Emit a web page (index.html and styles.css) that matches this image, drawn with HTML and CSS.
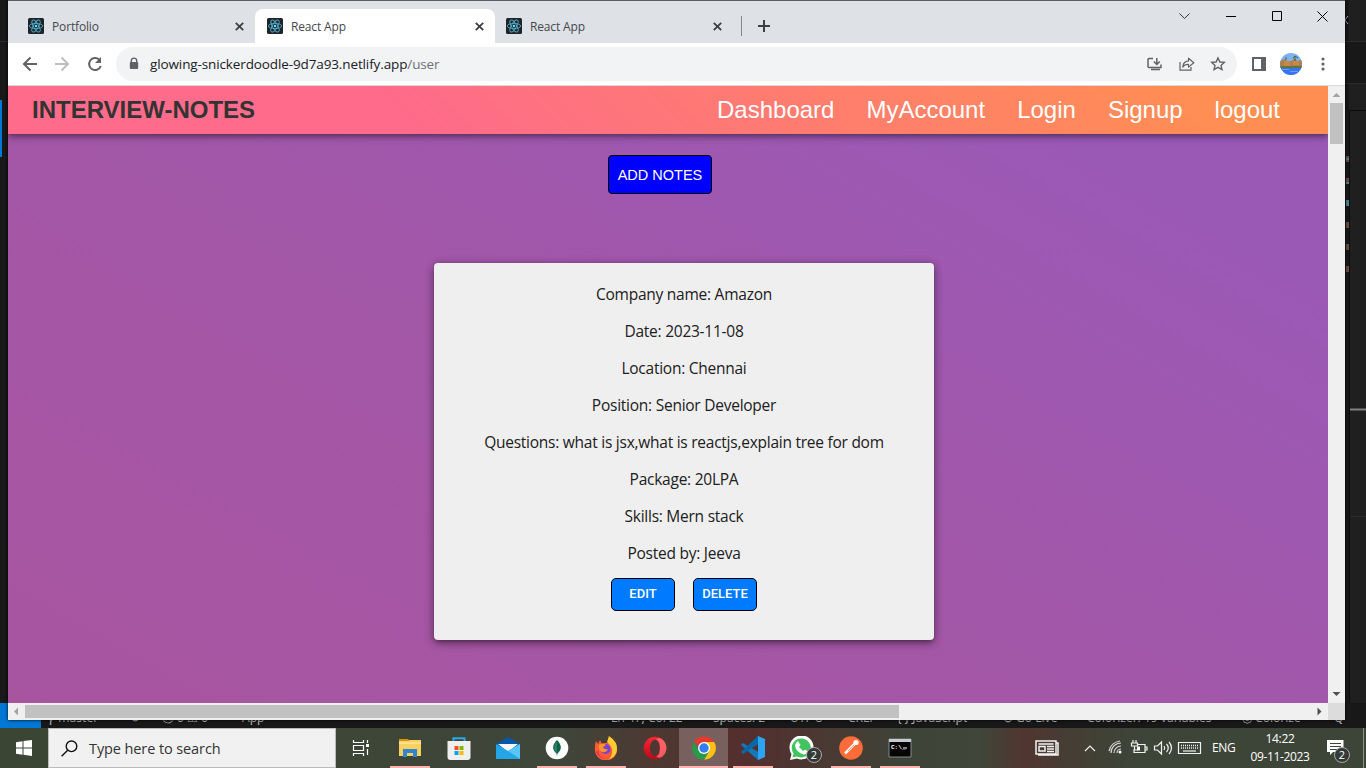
FILE: index.html
```html
<!DOCTYPE html>
<html lang="en">
<head>
<meta charset="utf-8">
<title>Interview Notes</title>
<link rel="stylesheet" href="styles.css">
</head>
<body>
<svg class="defs" aria-hidden="true">
  <symbol id="react" viewBox="0 0 16 16"><rect width="16" height="16" rx="1.5" fill="#20232a"/><g fill="none" stroke="#4fa9c4" stroke-width=".9"><ellipse cx="8" cy="8" rx="6.7" ry="2.6"/><ellipse cx="8" cy="8" rx="6.7" ry="2.6" transform="rotate(60 8 8)"/><ellipse cx="8" cy="8" rx="6.7" ry="2.6" transform="rotate(120 8 8)"/></g><circle cx="8" cy="8" r="1.3" fill="#61dafb"/></symbol>
  <symbol id="close" viewBox="0 0 8 8"><path d="M.7.7l6.6 6.6M7.3.7L.7 7.3" stroke="#3c4043" stroke-width="1.6"/></symbol>
</svg>
<div class="desktop">
  <div class="editor">
    <div class="rail"><i class="rail-line"></i><i class="rail-active"></i></div>
    <div class="side">
      <svg width="21" height="703" viewBox="0 0 21 703">
        <path fill="#1f1f1f" d="M0 0h21v703H0z"/><path fill="#181818" d="M0 0h4v703H0zM4 42h17v41H4z"/>
        <path stroke="#2b2b2b" d="M0 41.500h21M0 83.500h21M4 516.500h17"/><path stroke="#0c0c0c" fill="none" d="M21 110.500H4.500V703"/>
        <path stroke="#808080" stroke-width="2" d="M5 409.500h16"/><path stroke="#aaa" d="M3 16l-3 4 3 4"/>
        <g fill="#684b42"><path d="M1 156h3v6H1zM1 178h3v6H1zM1 222h3v6H1zM1 244h3v6H1zM1 266h3v6H1z"/></g><path fill="#4a8090" d="M1 158h3v2H1zM1 182h3v2H1zM1 200h3v6H1z"/>
      </svg>
    </div>
    <div class="status">
      <span class="remote">&gt;&lt;</span><span class="st s1">ꝩ master</span><span class="st s2">↻</span><span class="st s3">ⓧ 0 ⚠ 0</span><span class="st s4">App</span>
      <span class="st s5">Ln 47, Col 22</span><span class="st s6">Spaces: 2</span><span class="st s7">UTF-8</span><span class="st s8">CRLF</span><span class="st s9">{ } JavaScript</span><span class="st s10">⊚ Go Live</span><span class="st s11">Colorizer: 19 variables</span><span class="st s12">◎ Colorize</span><span class="st s13">Q</span>
    </div>
  </div>

  <main class="window">
    <div class="tabs">
      <div class="tab"><svg class="fav"><use href="#react"/></svg><span>Portfolio</span><svg class="x"><use href="#close"/></svg></div>
      <div class="tab active"><svg class="fav"><use href="#react"/></svg><span>React App</span><svg class="x"><use href="#close"/></svg></div>
      <div class="tab"><svg class="fav"><use href="#react"/></svg><span>React App</span><svg class="x"><use href="#close"/></svg></div>
      <i class="tab-sep"></i>
      <svg class="plus" width="12" height="12"><path d="M6 0v12M0 6h12" stroke="#3c4043" stroke-width="2"/></svg>
      <svg class="controls" width="152" height="14" viewBox="0 0 152 14" fill="none" stroke="#000"><path stroke="#333" d="M.5 4.500l5 5 5-5"/><path d="M47 7.500h10M93.500 2.500h9v9h-9zM138.500 2.500l10 10M148.500 2.500l-10 10"/></svg>
    </div>
    <div class="toolbar">
      <svg class="navs" width="82" height="16" viewBox="0 0 82 16" fill="none" stroke-width="2"><path stroke="#5f6368" d="M15 8H2M8.500 1.500L2 8l6.500 6.500"/><path stroke="#bcbec1" d="M33 8h13M39.500 1.500L46 8l-6.500 6.500"/><path stroke="#5f6368" d="M77.300 3.700A6 6 0 1 0 78.800 10"/><path fill="#5f6368" d="M79 1v6h-6z"/></svg>
      <div class="omnibox">
        <svg class="lock" width="10" height="14" viewBox="0 0 10 14"><path d="M2.300 6V3.800a2.700 2.700 0 0 1 5.400 0V6" fill="none" stroke="#5f6368" stroke-width="1.400"/><rect x=".8" y="5" width="8.400" height="7" rx="1" fill="#5f6368"/></svg>
        <span class="url">glowing-snickerdoodle-9d7a93.netlify.app<em>/user</em></span>
        <svg class="omni-icons" width="80" height="16" viewBox="0 0 80 16" fill="none" stroke="#5f6368" stroke-width="1.500"><path d="M6 2.500H2Q1 2.500 1 3.500v7q0 1 1 1h12v-3M9.800 2v6M6.800 5.500l3 3 3-3M4 13.500h9" /><path d="M33 6v8.200h11V11" stroke-width="1.200"/><path d="M41.500 2.200l5.300 4.600-5.300 4.300V8.500q-3.800-.3-5.800 2.700.3-5.600 5.800-6.300z" stroke-width="1.200" stroke-linejoin="round"/><path d="M71 2l1.900 4 4.400.4-3.300 3 1 4.300-4-2.300-4 2.300 1-4.300-3.300-3 4.400-.4z" stroke-width="1.400"/></svg>
      </div>
      <svg class="panel" width="14" height="14"><path fill="#5f6368" d="M0 0h14v14H0z"/><path fill="#fff" d="M2 2h7v10H2z"/></svg>
      <svg class="avatar" width="22" height="22" viewBox="0 0 22 22"><defs><clipPath id="av"><circle cx="11" cy="11" r="11"/></clipPath></defs><g clip-path="url(#av)"><path fill="#7eb2ef" d="M0 0h22v22H0z"/><path fill="#a88252" d="M0 8l5-2 2 2h5l2-3 3 3 5-1v8H0z"/><path fill="#c98743" d="M4 8h6v5H4zM13 8h6v4h-6z"/><path fill="#5e7441" d="M0 13h22v2H0z"/><path fill="#3874ed" d="M0 15h22v7H0z"/><path stroke="#6d9af7" d="M2 16.500h7M10 18.500h8"/><path stroke="#456147" fill="none" d="M15 8V4M13 5l2-2 3 2M6 7V4"/></g></svg>
      <svg class="dots" width="4" height="14"><circle cx="2" cy="2" r="1.600"/><circle cx="2" cy="7" r="1.600"/><circle cx="2" cy="12" r="1.600"/></svg>
    </div>
    <div class="viewport">
      <div class="page">
        <header class="nav"><h1>INTERVIEW-NOTES</h1><nav><a>Dashboard</a><a>MyAccount</a><a>Login</a><a>Signup</a><a>logout</a></nav></header>
        <button class="add">ADD NOTES</button>
        <article class="card">
          <p>Company name: Amazon</p><p>Date: 2023-11-08</p><p>Location: Chennai</p><p>Position: Senior Developer</p><p>Questions: what is jsx,what is reactjs,explain tree for dom</p><p>Package: 20LPA</p><p>Skills: Mern stack</p><p>Posted by: Jeeva</p>
          <div class="actions"><button>EDIT</button><button>DELETE</button></div>
        </article>
      </div>
      <div class="vscroll"><svg width="17" height="17"><path fill="#a3a3a3" d="M4.500 11l4-4 4 4z"/></svg><i></i><svg class="down" width="17" height="17"><path fill="#505050" d="M4.500 6l4 4 4-4z"/></svg></div>
    </div>
    <div class="hscroll"><svg width="17" height="17"><path fill="#a3a3a3" d="M10 4.500l-4 4 4 4z"/></svg><i></i><svg class="right" width="17" height="17"><path fill="#505050" d="M6.500 4.500l4 4-4 4z"/></svg><b></b></div>
  </main>

  <footer class="taskbar">
    <div class="start"><svg width="16" height="16" viewBox="0 0 16 16" fill="#fff"><path d="M0 2.200l6.500-.9v6.200H0zM7.500 1.100L16 0v7.500H7.500zM0 8.500h6.500v6.200L0 13.800zM7.500 8.500H16V16l-8.500-1.200z"/></svg></div>
    <div class="search"><svg width="17" height="17" viewBox="0 0 17 17" fill="none" stroke="#111" stroke-width="1.400"><circle cx="10.500" cy="6.300" r="5.300"/><path d="M6.700 10.200L.6 16.300"/></svg><span>Type here to search</span></div>
    <div class="apps">
      <div class="app view"><svg width="18" height="16" viewBox="0 0 18 16" fill="none" stroke="#fff" stroke-width="1.200"><path d="M1.500 0v2.500h10V0M1.500 5.500h10v5h-10zM1.500 16v-2.500h10V16M15.500 0v3M15.500 9v6"/><path d="M14 4h3v3h-3z" fill="#fff" stroke="none"/></svg></div>
      <div class="app on"><svg width="24" height="24" viewBox="0 0 24 24"><path fill="#d89512" d="M1 3h9l2 2v4H1z"/><path fill="#fcd05e" d="M1 5h9l2-1h11v16H1z"/><path fill="#ffe08a" d="M1 6h22v2H1z"/><path fill="#2f86d0" d="M5 13h14v8h-4v-4H9v4H5z"/></svg></div>
      <div class="app"><svg width="24" height="24" viewBox="0 0 24 24"><path d="M6.500 7V2.300h11V7" fill="none" stroke="#25abe8" stroke-width="2"/><path fill="#efefef" d="M.5 5h23v16q0 3-3 3h-17q-3 0-3-3z"/><path fill="#f25022" d="M7.500 10h4v4h-4z"/><path fill="#7fba00" d="M12.500 10h4v4h-4z"/><path fill="#00a4ef" d="M7.500 15h4v4h-4z"/><path fill="#ffb900" d="M12.500 15h4v4h-4z"/></svg></div>
      <div class="app"><svg width="24" height="24" viewBox="0 0 24 24"><path fill="#0758a8" d="M0 8l12-7 12 7v6H0z"/><path fill="#f4f6f7" d="M2 8h20L12 16z"/><path fill="#22a6e8" d="M0 8l12 7 12-7v15H0z"/><path fill="#58c7f5" d="M24 8v15L12 15z"/></svg></div>
      <div class="app on"><svg width="24" height="24" viewBox="0 0 24 24"><circle cx="12" cy="12" r="11.300" fill="#fff"/><path fill="#116149" d="M12 4c5 5 5 10 .5 13.500L12 20l-.5-2.500C7 14 7 9 12 4z"/><path fill="#3fa37c" d="M12 5v12c-4-3-3.500-8 0-12z" opacity=".5"/></svg></div>
      <div class="app on"><svg width="24" height="24" viewBox="0 0 24 24"><path fill="#ff5b36" d="M2 5l2 3 2-4 2 4q4-2 6-1l1-6q8 5 8 13a11 10.500 0 0 1-22 0Q.5 9 2 5z"/><path fill="#ffcb32" d="M15 0q9 6 8 14-1 7-8 9 6-7 1-14l-3-3z"/><circle cx="11.500" cy="13" r="5" fill="#7542d8"/><path fill="#ff9527" d="M5 9q4-3 7 0l-3 2q1 3 5 2-2 4-6 3-4-2-3-7z"/><path fill="#e8305e" d="M2 16q3 7 11 7-8-1-9-9z"/></svg></div>
      <div class="app"><svg width="24" height="24" viewBox="0 0 24 24"><defs><linearGradient id="op" x2="0" y2="1"><stop stop-color="#fb2634"/><stop offset="1" stop-color="#bd0916"/></linearGradient></defs><path fill="url(#op)" fill-rule="evenodd" d="M12 .7a11.300 11.300 0 1 0 0 22.600 11.300 11.300 0 1 0 0-22.600zm0 3c3 0 4.500 4 4.500 8.300s-1.500 8.300-4.500 8.300S7 16.300 7 12s2-8.300 5-8.300z"/><path fill="#ff777c" d="M13 3.500q4-2.500 7 .5a11 11 0 0 1 0 16q-3 3-7 .5 4-1 4-8.500t-4-8.500z" opacity=".75"/></svg></div>
      <div class="app on chrome"><svg width="24" height="24" viewBox="0 0 24 24"><path fill="#e33b2e" d="M12 12L1.800 6A11.800 11.800 0 0 1 22.200 6H12z"/><path fill="#fbc116" d="M12 6h10.200A11.800 11.800 0 0 1 12 23.800L17.200 15z"/><path fill="#269b49" d="M1.800 6l5 9q4 4 10.400 0L12 23.800A11.800 11.800 0 0 1 1.800 6z"/><circle cx="12" cy="12" r="6" fill="#fff"/><circle cx="12" cy="12" r="4.700" fill="#347df0"/></svg></div>
      <div class="app on"><svg width="24" height="24" viewBox="0 0 24 24"><path fill="#1478bc" d="M2 7L0 9l17 15 2-1V17z"/><path fill="#0868a8" d="M0 16l2 2L19 7V1l-2-1z"/><path fill="#2ba5ef" d="M17 0l7 3v18l-7 3V0z"/></svg></div>
      <div class="app wa"><svg width="25" height="24" viewBox="0 0 25 24"><path fill="#fff" d="M1 24l1.500-6A12 12 0 1 1 8 22.500z"/><path fill="#41c45b" d="M3.500 21.500l1-4A9.500 9.500 0 1 1 8 20.500z"/><path fill="#fff" d="M7 7l2-2 2.500 4-1.500 2 4 4 2-1.500L19 15.500q-1 3-4 3-8-2-9-9z"/></svg><b>2</b></div>
      <div class="app on"><svg width="24" height="24" viewBox="0 0 24 24"><circle cx="12" cy="12" r="11.800" fill="#ff6c37"/><path d="M6 17.500l10-10" stroke="#fff" stroke-width="2.600"/><circle cx="17" cy="6.500" r="2.600" fill="#fff"/><path d="M9 15l6-6" stroke="#ff6c37" stroke-width=".7"/></svg></div>
      <div class="app on"><svg width="24" height="20" viewBox="0 0 24 20"><path fill="#050505" stroke="#85898c" d="M1 1h22v18H1z"/><path fill="#c6cbd2" d="M1 1h22v3H1z"/><text x="3" y="10.500">C:\_</text><path d="M15 10h4" stroke="#fff"/></svg></div>
    </div>
    <svg class="tray" width="206" height="24" viewBox="0 0 206 24" fill="none" stroke="#f2f2f2" stroke-width="1.200">
      <path stroke-width="1.500" d="M2 5h20v13H2zM22 7h2v12H4M4.500 8h15"/><path stroke-width="1.500" d="M5 10.500h6V15H5zM13 10.500h7M13 13h7M13 15.500h7"/>
      <path d="M51 15l5-5 5 5"/>
      <path stroke="#d9d9d9" d="M77 17a10 10 0 0 1 10-10M80 17a7 7 0 0 1 7-7M83 17a4 4 0 0 1 4-4M75 15A13 13 0 0 1 86 5"/><circle cx="86" cy="16" r="1.500" fill="#fff" stroke="none"/>
      <path d="M99 4v3M102 4v3M97.500 7h6v3h-6zM100.500 10v4h3M103 8.500h8v8h-11v-3M111 11h2v3h-2"/><path fill="#fff" stroke="none" d="M103 10.500h3v4h-3z"/>
      <path d="M120.500 10h3l4-4v12l-4-4h-3zM130 10q1.500 2 0 4M132.500 8q3.500 4 0 8M135 6q5 6 0 12"/>
      <path d="M144.500 6.500h22v11h-22z"/><path stroke-dasharray="1 1" stroke-width="1.500" d="M147 9.500h17M147 12h17"/><path d="M149 15h13"/>
    </svg>
    <span class="lang">ENG</span>
    <div class="clock"><span>14:22</span><span>09-11-2023</span></div>
    <div class="notice"><svg width="17" height="16" viewBox="0 0 17 16"><path fill="#fff" d="M0 0h16.500v12H6l-3 3v-3H0z"/><path stroke="#3d4538" d="M3 3.500h11M3 6.500h11M3 9.500h7"/></svg><b>2</b></div>
    <i class="peek"></i>
  </footer>
</div>
</body>
</html>
```
FILE: styles.css
```css
* { box-sizing: border-box; }
body { margin: 0; overflow: hidden; font-family: "Open Sans", sans-serif; }
svg { display: block; flex: none; }
.defs { position: absolute; width: 0; height: 0; }
.desktop { position: relative; width: 1366px; height: 768px; display: flex; flex-direction: column; background: #181818; }

.editor { height: 728px; display: grid; grid-template-columns: 8px 1fr 21px; grid-template-rows: 703px 25px; overflow: hidden; }
.rail { padding-top: 41px; background: #181818; }
.rail-line { display: block; height: 1px; background: #2b2b2b; }
.rail-active { display: block; width: 2px; height: 57px; margin-top: 58px; background: #0078d4; }
.side { grid-column: 3; }
.status { grid-column: 1 / -1; position: relative; background: #181818; color: #bbb; font: 12px/25px "Noto Sans", sans-serif; }
.remote { display: block; width: 41px; height: 25px; padding-left: 14px; line-height: 24px; background: #0078d4; }
.st { position: absolute; top: 2px; white-space: nowrap; }
.s1 { left: 49px; } .s2 { left: 130px; } .s3 { left: 162px; } .s4 { left: 242px; }
.s5 { left: 611px; } .s6 { left: 713px; } .s7 { left: 790px; } .s8 { left: 848px; } .s9 { left: 897px; }
.s10 { left: 1003px; } .s11 { left: 1087px; } .s12 { left: 1242px; } .s13 { left: 1334px; }

.window { position: absolute; left: 8px; top: 0; width: 1337px; height: 720px; display: flex; flex-direction: column; background: #fff; border-top: 1px solid #5c5e61; box-shadow: 0 0 3px #000; }
.tabs { height: 42px; display: flex; align-items: center; padding: 8px 14px 0 8px; background: #dee1e6; font-size: 12px; color: #45484c; }
.tab { width: 239px; height: 34px; display: flex; align-items: center; padding: 0 11px 0 12px; letter-spacing: -.15px; }
.tab span { margin-left: 8px; flex: 1; }
.tab.active { width: 240px; background: #fff; border-radius: 8px 8px 0 0; margin-right: -1px; }
.fav { width: 16px; height: 16px; }
.x { width: 9px; height: 9px; }
.tab-sep { width: 1px; height: 20px; margin-left: 8px; background: #80868b; }
.plus { margin-left: 16px; }
.controls { margin: -20px 0 0 auto; }
.toolbar { height: 43px; display: flex; align-items: center; border-bottom: 1px solid #d8dade; background: #fff; padding-right: 20px; }
.navs { margin: 0 12px 0 14px; }
.omnibox { width: 1121px; height: 34px; display: flex; align-items: center; padding: 0 10px 0 13px; border-radius: 17px; background: #f1f3f4; }
.url { margin-left: 11px; flex: 1; font-size: 13.500px; letter-spacing: -.12px; color: #202124; }
.url em { font-style: normal; color: #6d7175; }
.panel { margin-left: 15px; }
.avatar { margin-left: 14px; }
.dots { margin-left: auto; fill: #5f6368; }

.viewport { display: flex; height: 617px; }
.page { width: 1320px; height: 617px; overflow: hidden; display: flex; flex-direction: column; background: linear-gradient(30deg, #a855a0, #a357a7 45%, #9b59b6 85%); }
.nav { height: 48px; flex: none; display: flex; align-items: center; justify-content: space-between; padding: 0 48px 0 24px; background: linear-gradient(45deg, #fe6b8b 30%, #ff8e53 90%); box-shadow: 0 2px 4px -1px rgba(0,0,0,.2), 0 4px 5px rgba(0,0,0,.14), 0 1px 10px rgba(0,0,0,.3); font: 24px/28px "Liberation Sans", Arial, sans-serif; color: #fff; }
.nav h1 { margin: 0; font-size: 24px; color: #333; letter-spacing: 0; }
.nav nav { display: flex; gap: 32px; }
.add { flex: none; width: 104px; height: 39px; margin: 21px 0 0 600px; padding: 0; border: 1px solid #000; border-radius: 4px; background: #00f; color: #fff; font: 14.500px "Liberation Sans", Arial, sans-serif; }
.card { flex: none; width: 500px; height: 377px; margin: 69px 0 0 426px; padding: 19px 0 0; background: #efefef; border-radius: 4px; box-shadow: 0 3px 3px -2px rgba(0,0,0,.2), 0 3px 8px rgba(0,0,0,.38), 0 1px 10px rgba(0,0,0,.18); text-align: center; color: #202020; }
.card p { height: 24px; margin: 0 0 13px; font-size: 15.500px; line-height: 25px; letter-spacing: -.25px; white-space: nowrap; }
.actions { display: flex; justify-content: center; gap: 18px; margin-top: 5px; }
.actions button { width: 64px; height: 33px; padding: 0 0 2px; border: 1px solid #000; border-radius: 5px; background: #007bff; color: #fff; font: 500 13px Roboto, sans-serif; }
.vscroll { width: 17px; display: flex; flex-direction: column; background: #f0f0f0; }
.vscroll i { width: 13px; height: 41px; margin-left: 2px; background: #c1c1c1; }
.down { margin-top: auto; }
.hscroll { height: 17px; display: flex; background: #f0f0f0; }
.hscroll i { width: 874px; height: 13px; margin-top: 2px; background: #c1c1c1; }
.right { margin-left: auto; }
.hscroll b { width: 17px; background: #dcdcdc; }

.taskbar { height: 40px; display: flex; color: #fff; background: linear-gradient(90deg, #3b4533 0, #3f463a 560px, #4c3932 650px, #542f2e 745px, #463c34 850px, #3d4538 910px, #404639 980px, #503530 1025px, #453e35 1070px, #3d4538 1140px); }
.start { width: 48px; display: grid; place-items: center; }
.search { width: 288px; display: flex; align-items: center; gap: 11px; padding-left: 12px; border: 1px solid #bbb; background: #f1f1f1; color: #333; font-size: 14.500px; letter-spacing: -.1px; }
.apps { display: flex; width: 588px; }
.app { position: relative; width: 49px; height: 40px; display: grid; place-items: center; }
.app.on::after { content: ""; position: absolute; left: 5px; right: 4px; bottom: 0; height: 2px; background: #fbb4ad; }
.app.chrome { background: #77605e; }
.app.chrome::after { left: 0; right: 0; }
.app text { font: bold 6px "Liberation Mono", monospace; fill: #fff; }
.wa b, .notice b { position: absolute; left: 29px; top: 19px; width: 16px; height: 16px; border: 1px solid #aaa; border-radius: 50%; background: #343a37; font: 11px/14px "Open Sans", sans-serif; text-align: center; }
.tray { margin: 8px 0 0 110px; }
.lang { width: 38px; margin-left: -28px; line-height: 40px; font-size: 12px; letter-spacing: -.3px; }
.clock { width: 60px; display: flex; flex-direction: column; align-items: center; font-size: 12px; line-height: 18px; padding-top: 2px; letter-spacing: -.35px; white-space: nowrap; }
.notice { position: relative; margin: 12px 0 0 17px; width: 36px; }
.notice b { left: 7px; top: 7px; }
.peek { width: 1px; background: #899083; }
```
